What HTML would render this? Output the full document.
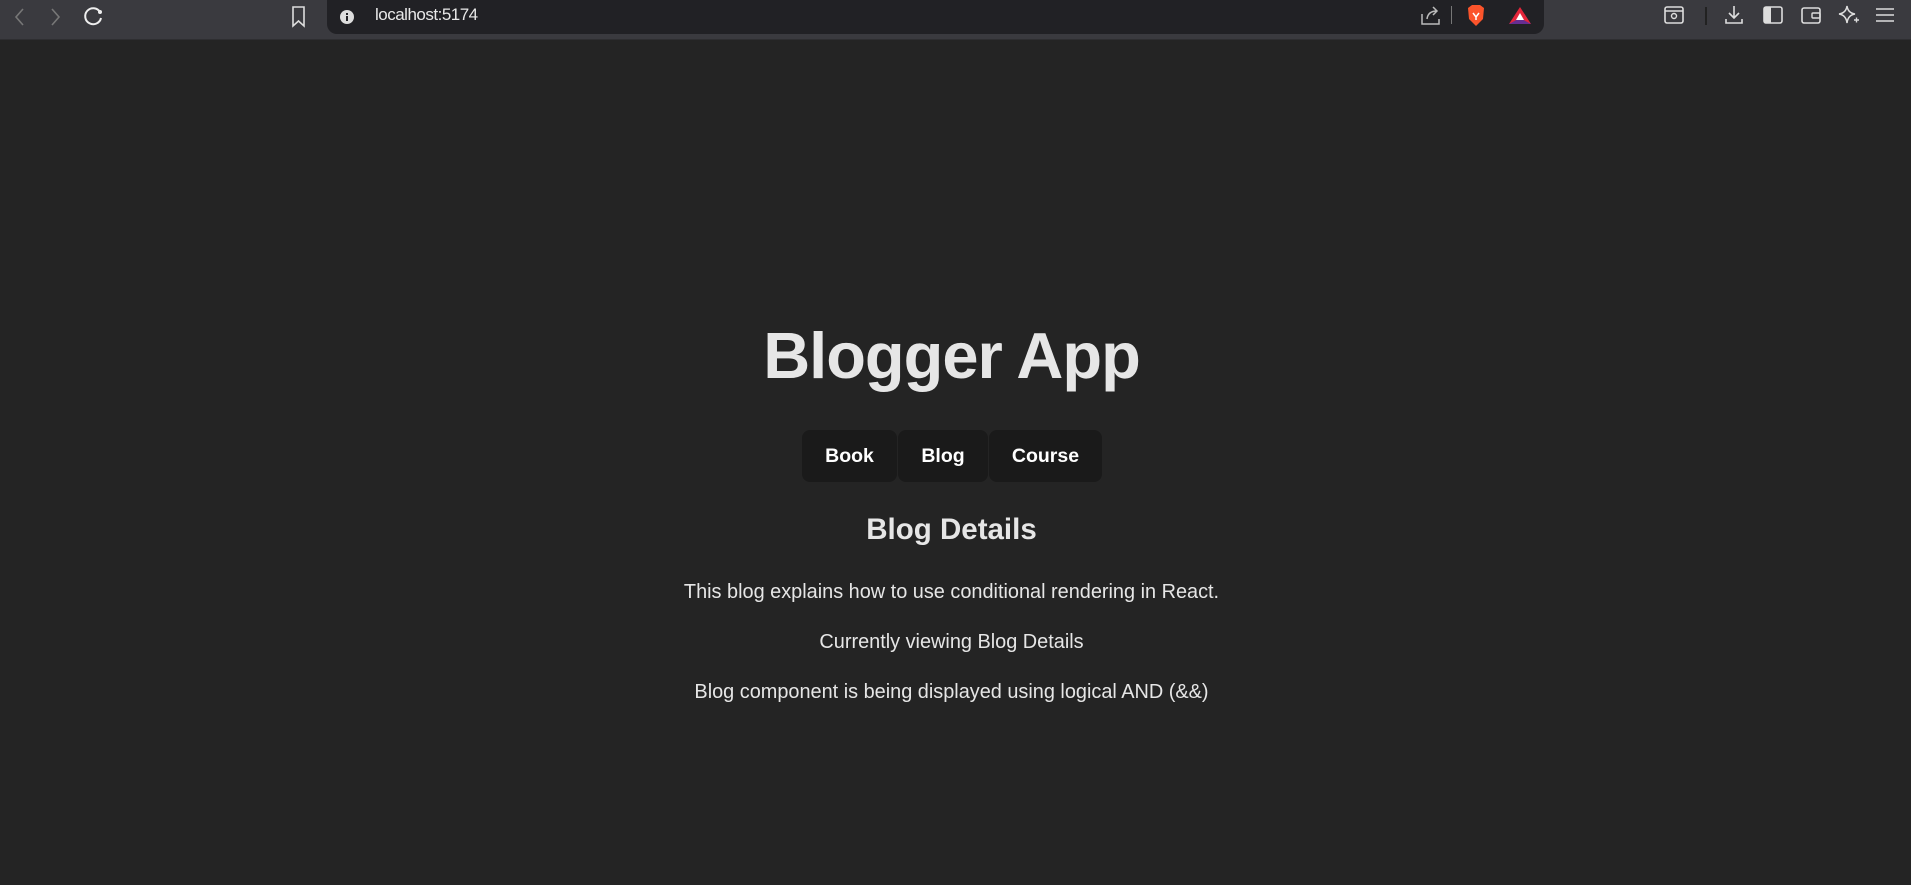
<!DOCTYPE html>
<html><head><meta charset="utf-8"><style>
*{margin:0;padding:0;box-sizing:border-box}
html,body{width:1911px;height:885px;overflow:hidden;background:#242424;font-family:"Segoe UI","Liberation Sans",sans-serif;color:rgba(255,255,255,.87)}
.bar{position:absolute;left:0;top:0;width:1911px;height:40px;background:#3a3a3f;border-bottom:1px solid #2e2e31}
.url{position:absolute;left:327px;top:0;width:1217px;height:34px;background:#212125;border-radius:0 0 10px 10px}
.url span{position:absolute;left:48px;top:5px;font-size:17px;color:#e8e8e8;font-family:"Liberation Sans",sans-serif;letter-spacing:-0.5px}
svg{position:absolute}
h1{position:absolute;top:318px;left:-4px;width:1911px;text-align:center;font-size:65px;font-weight:bold;color:#e6e6e6;font-family:"Liberation Sans",sans-serif;letter-spacing:-1px}
.btn{position:absolute;top:430px;height:52px;background:#1a1a1a;border-radius:8px;color:#fff;font-weight:bold;font-size:19.5px;font-family:"Liberation Sans",sans-serif;text-align:center;line-height:52px}
h2{position:absolute;top:513px;left:-4px;width:1911px;text-align:center;font-size:29.5px;font-weight:bold;color:#e6e6e6;font-family:"Liberation Sans",sans-serif}
p{position:absolute;left:-4px;width:1911px;text-align:center;font-size:19.9px;color:#e6e6e6;font-family:"Liberation Sans",sans-serif}
</style></head><body>
<div class="bar">
<svg width="20" height="24" style="left:10px;top:5px"><path d="M13 4 L6 12 L13 20" stroke="#777" stroke-width="1.6" fill="none"/></svg>
<svg width="20" height="24" style="left:46px;top:5px"><path d="M6 4 L13 12 L6 20" stroke="#777" stroke-width="1.6" fill="none"/></svg>
<svg width="24" height="24" style="left:82px;top:4px"><path d="M18 8 A8 8 0 1 0 19 14" stroke="#eee" stroke-width="2" fill="none"/><circle cx="18" cy="8" r="2" fill="#eee"/></svg>
<svg width="20" height="26" style="left:289px;top:4px"><path d="M4 3 H15 V22 L9.5 17 L4 22 Z" stroke="#ddd" stroke-width="1.6" fill="none"/></svg>
<div class="url">
<svg width="20" height="20" style="left:10px;top:7px"><circle cx="10" cy="10" r="7" fill="#ddd"/><rect x="9" y="9" width="2" height="5" fill="#212125"/><rect x="9" y="6" width="2" height="2" fill="#212125"/></svg>
<span>localhost:5174</span>
<svg width="24" height="24" style="left:1092px;top:4px"><path d="M3 10 V20 H20 V15 M8 15 Q9 7 18 7 M14 3 L18 7 L14 11" stroke="#bbb" stroke-width="1.5" fill="none"/></svg>
<div style="position:absolute;left:1124px;top:6px;width:1px;height:18px;background:#777"></div>
<svg width="24" height="26" style="left:1137px;top:3px"><path d="M4 5 L8 2 H16 L20 5 L19 16 L12 23 L5 16 Z" fill="#fb542b"/><path d="M9 10 L12 14 L15 10 M12 14 V17" stroke="#fff" stroke-width="1.5" fill="none"/></svg>
<svg width="26" height="24" style="left:1180px;top:4px"><path d="M13 3 L24 20 H2 Z" fill="#e3253a"/><path d="M2 20 L13 14 L24 20 Z" fill="#662d91"/><path d="M13 9 L17 16 H9 Z" fill="#fff"/></svg>
</div>
<svg width="24" height="24" style="left:1662px;top:3px"><rect x="3" y="4" width="18" height="16" rx="2" stroke="#ddd" stroke-width="1.6" fill="none"/><line x1="3" y1="8" x2="21" y2="8" stroke="#ddd" stroke-width="1.5"/><circle cx="12" cy="13" r="2.5" stroke="#ddd" stroke-width="1.4" fill="none"/></svg>
<div style="position:absolute;left:1705px;top:7px;width:2px;height:18px;background:#222"></div>
<svg width="24" height="24" style="left:1722px;top:3px"><path d="M12 3 V15 M7 10 L12 15 L17 10 M4 16 V20 H20 V16" stroke="#ddd" stroke-width="1.6" fill="none"/></svg>
<svg width="24" height="24" style="left:1761px;top:3px"><rect x="3" y="4" width="18" height="16" rx="2" stroke="#ddd" stroke-width="1.6" fill="none"/><rect x="3" y="4" width="7" height="16" fill="#ddd"/></svg>
<svg width="24" height="24" style="left:1799px;top:3px"><rect x="3" y="5" width="18" height="15" rx="2" stroke="#ddd" stroke-width="1.6" fill="none"/><rect x="13" y="10" width="8" height="5" rx="1" stroke="#ddd" stroke-width="1.4" fill="none"/></svg>
<svg width="24" height="24" style="left:1836px;top:3px"><path d="M11 3 Q12 10 19 11 Q12 12 11 20 Q10 12 3 11 Q10 10 11 3 Z" stroke="#ddd" stroke-width="1.5" fill="none"/><path d="M18 17 H23 M20.5 14.5 V19.5" stroke="#ddd" stroke-width="1.4"/></svg>
<svg width="24" height="24" style="left:1873px;top:3px"><path d="M3 6 H21 M3 12 H21 M3 18 H21" stroke="#ddd" stroke-width="1.6"/></svg>
</div>
<h1>Blogger App</h1>
<div class="btn" style="left:802px;width:95px">Book</div>
<div class="btn" style="left:898px;width:90px">Blog</div>
<div class="btn" style="left:989px;width:113px">Course</div>
<h2>Blog Details</h2>
<p style="top:581px">This blog explains how to use conditional rendering in React.</p>
<p style="top:631px">Currently viewing Blog Details</p>
<p style="top:681px">Blog component is being displayed using logical AND (&amp;&amp;)</p>
</body></html>
